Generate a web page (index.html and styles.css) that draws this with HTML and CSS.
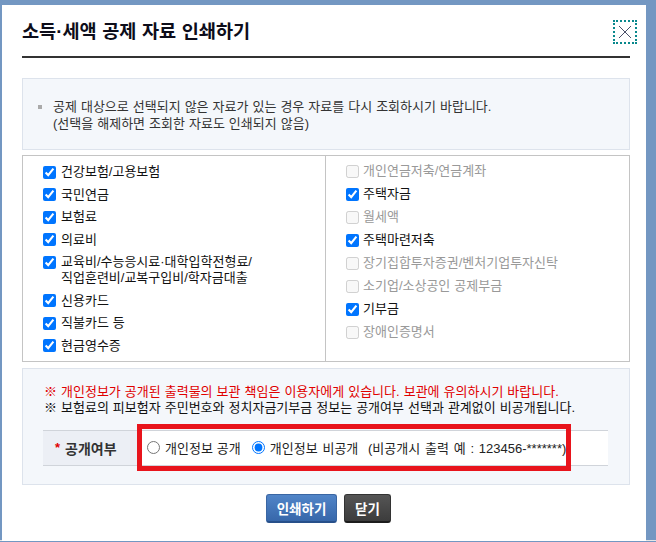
FILE: index.html
```html
<!DOCTYPE html>
<html lang="ko">
<head>
<meta charset="utf-8">
<title>소득·세액 공제 자료 인쇄하기</title>
<link rel="stylesheet" href="styles.css">
</head>
<body>
<div class="frame">
  <div class="dialog">
    <div class="head">
      <h1 class="title">소득·세액 공제 자료 인쇄하기</h1>
      <button class="close" type="button" aria-label="닫기">
        <svg width="14" height="14" viewBox="0 0 14 14"><path d="M1 1L13 13M13 1L1 13" stroke="#4a5068" stroke-width="1" fill="none"/></svg>
      </button>
    </div>

    <div class="notice">
      <span class="bullet"></span>
      <p>공제 대상으로 선택되지 않은 자료가 있는 경우 자료를 다시 조회하시기 바랍니다.<br>(선택을 해제하면 조회한 자료도 인쇄되지 않음)</p>
    </div>

    <div class="checks">
      <ul class="col col-left">
        <li><input type="checkbox" checked><span>건강보험/고용보험</span></li>
        <li><input type="checkbox" checked><span>국민연금</span></li>
        <li><input type="checkbox" checked><span>보험료</span></li>
        <li><input type="checkbox" checked><span>의료비</span></li>
        <li><input type="checkbox" checked><span>교육비/수능응시료·대학입학전형료/<br>직업훈련비/교복구입비/학자금대출</span></li>
        <li><input type="checkbox" checked><span>신용카드</span></li>
        <li><input type="checkbox" checked><span>직불카드 등</span></li>
        <li><input type="checkbox" checked><span>현금영수증</span></li>
      </ul>
      <ul class="col col-right">
        <li class="off"><input type="checkbox" disabled><span>개인연금저축/연금계좌</span></li>
        <li><input type="checkbox" checked><span>주택자금</span></li>
        <li class="off"><input type="checkbox" disabled><span>월세액</span></li>
        <li><input type="checkbox" checked><span>주택마련저축</span></li>
        <li class="off"><input type="checkbox" disabled><span>장기집합투자증권/벤처기업투자신탁</span></li>
        <li class="off"><input type="checkbox" disabled><span>소기업/소상공인 공제부금</span></li>
        <li><input type="checkbox" checked><span>기부금</span></li>
        <li class="off"><input type="checkbox" disabled><span>장애인증명서</span></li>
      </ul>
    </div>

    <div class="warn">
      <p class="red">※ 개인정보가 공개된 출력물의 보관 책임은 이용자에게 있습니다. 보관에 유의하시기 바랍니다.</p>
      <p>※ 보험료의 피보험자 주민번호와 정치자금기부금 정보는 공개여부 선택과 관계없이 비공개됩니다.</p>
      <div class="formrow">
        <div class="label"><span class="req">*</span>공개여부</div>
        <div class="value">
          <label class="radio"><input type="radio" name="open"><span>개인정보 공개</span></label>
          <label class="radio radio-wide"><input type="radio" name="open" checked><span>개인정보 비공개&nbsp; (비공개시 출력 예 : 123456-*******)</span></label>
        </div>
        <div class="highlight"></div>
      </div>
    </div>

    <div class="buttons">
      <button class="btn btn-print" type="button">인쇄하기</button>
      <button class="btn btn-close" type="button">닫기</button>
    </div>
  </div>
</div>
</body>
</html>
```

FILE: styles.css
```css
* { box-sizing: border-box; }
html, body { margin: 0; padding: 0; }
body {
  width: 656px;
  height: 542px;
  overflow: hidden;
  background: #7397c2;
  font-family: "Liberation Sans", "Noto Sans CJK KR", sans-serif;
  font-size: 13px;
  word-spacing: 0.4px;
  color: #222;
}
.frame {
  padding: 5px 10px 0 2px;
  height: 541px;
  border-bottom: 1px solid #e6e6e6;
}
.dialog {
  position: relative;
  background: #fff;
  height: 536px;
  padding: 15px 16px 0 20px;
}
.head {
  border-bottom: 2px solid #333;
  padding-bottom: 12px;
}
.title {
  margin: 0;
  font-size: 18.6px;
  line-height: 24px;
  font-weight: 700;
  color: #0d0d1a;
}
.close {
  position: absolute;
  top: 15px;
  right: 9px;
  width: 24px;
  height: 24px;
  padding: 0;
  background: #fff;
  border: 2px dotted #08888c;
  display: flex;
  align-items: center;
  justify-content: center;
}
.notice {
  margin-top: 20px;
  background: #f4f7fb;
  border: 1px solid #dde3ec;
  padding: 19px 16px 17px 15px;
  display: flex;
  color: #333;
}
.notice .bullet {
  width: 4px;
  height: 4px;
  background: #aaa;
  margin: 7px 11px 0 0;
  flex: none;
}
.notice p {
  margin: 0;
  line-height: 17px;
}
.checks {
  margin-top: 5px;
  border: 1px solid #c4c4c4;
  display: grid;
  grid-template-columns: 303px 1fr;
}
.col {
  list-style: none;
  margin: 0;
  padding: 8px 10px 7px 20px;
  display: flex;
  flex-direction: column;
  gap: 6.5px;
}
.col-left { border-right: 1px solid #c4c4c4; }
.col-right { gap: 7px; padding-top: 7px; }
.col li {
  display: flex;
  align-items: flex-start;
  line-height: 16px;
  color: #111;
}
.col input {
  margin: 1.5px 5px 0 0;
  width: 13px;
  height: 13px;
  flex: none;
}
.col-right input { margin-right: 4px; }
.col li.off { color: #999; }
.warn {
  margin-top: 6px;
  background: #f4f7fb;
  border: 1px solid #dde3ec;
  padding: 15px 21px 18px 20px;
}
.warn p {
  margin: 0 0 0 1px;
  line-height: 16px;
  color: #111;
}
.warn p.red { color: #e00000; }
.formrow {
  position: relative;
  margin-top: 14px;
  display: flex;
  border-top: 1px solid #d0d4da;
  border-bottom: 1px solid #d0d4da;
  height: 36px;
}
.label {
  width: 95px;
  background: #eceff5;
  display: flex;
  align-items: center;
  padding-left: 12px;
  font-size: 14px;
  font-weight: 700;
  color: #333;
}
.req {
  color: #e00000;
  margin-right: 5px;
  font-weight: 700;
  font-size: 13px;
}
.value {
  flex: 1;
  background: #fff;
  display: flex;
  align-items: center;
  padding-left: 9px;
  gap: 11px;
}
.radio {
  display: flex;
  align-items: center;
  color: #222;
}
.radio-wide { word-spacing: 1.2px; }
.radio input {
  margin: 0 5px 0 0;
  width: 13px;
  height: 13px;
}
.highlight {
  position: absolute;
  left: 94px;
  top: -7px;
  width: 434px;
  height: 47px;
  border: 5px solid #e8141c;
  pointer-events: none;
}
.buttons {
  display: flex;
  justify-content: center;
  gap: 7px;
  margin-top: 9px;
  padding-left: 5px;
}
.btn {
  height: 29px;
  border-radius: 3px;
  color: #fff;
  font-family: "Liberation Sans", "Noto Sans CJK KR", sans-serif;
  font-size: 13.5px;
  font-weight: 700;
  padding: 0;
  cursor: pointer;
}
.btn-print {
  width: 71px;
  background: linear-gradient(#5185c8, #3767aa);
  border: 1px solid #3a66a3;
  border-bottom: 2px solid #27508a;
}
.btn-close {
  width: 47px;
  background: linear-gradient(#555, #3c3c3c);
  border: 1px solid #333;
  border-bottom: 2px solid #1c1c1c;
}
```
